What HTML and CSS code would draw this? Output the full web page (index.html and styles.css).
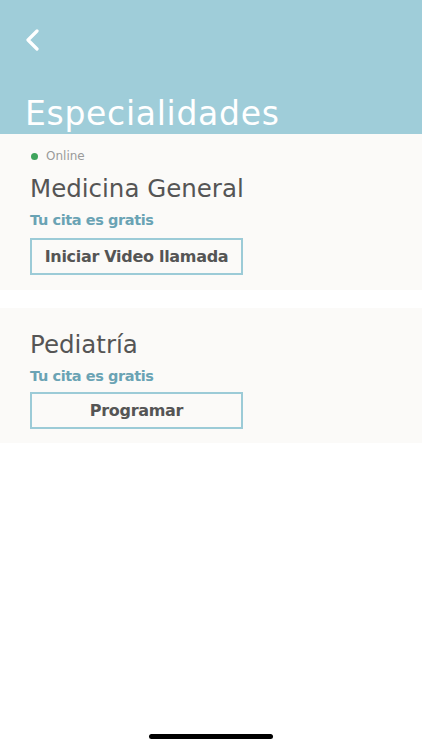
FILE: index.html
```html
<!DOCTYPE html>
<html lang="es">
<head>
<meta charset="utf-8">
<link rel="stylesheet" href="styles.css">
</head>
<body>
<div class="screen">
  <header class="header">
    <div class="back">
      <svg width="16" height="22" viewBox="0 0 16 22"><path d="M12 2 L3 11 L12 20" fill="none" stroke="#fff" stroke-width="3.2" stroke-linecap="round" stroke-linejoin="round"/></svg>
    </div>
    <h1 class="title">Especialidades</h1>
  </header>
  <section class="card card-first">
    <div class="status"><span class="dot"></span><span class="status-text">Online</span></div>
    <h2 class="name">Medicina General</h2>
    <p class="free">Tu cita es gratis</p>
    <button class="btn">Iniciar Video llamada</button>
  </section>
  <section class="card card-second">
    <h2 class="name">Pediatría</h2>
    <p class="free">Tu cita es gratis</p>
    <button class="btn">Programar</button>
  </section>
  <div class="spacer"></div>
  <div class="home-bar"></div>
</div>
</body>
</html>
```
FILE: styles.css
```css
* { box-sizing: border-box; }
html, body { margin: 0; padding: 0; background: #fff; }
body { font-family: "DejaVu Sans", "Open Sans", sans-serif; }
.screen { width: 422px; height: 750px; display: flex; flex-direction: column; overflow: hidden; }
.header { background: #9fcdd9; height: 134px; flex: none; overflow: hidden; padding: 29px 0 0 25px; }
.back { width: 16px; height: 22px; }
.back svg { display: block; }
.title { margin: 43px 0 0 0; color: #fff; font-weight: 400; font-size: 33px; line-height: 40px; letter-spacing: 0.7px; }
.card { background: #fbfaf8; padding: 0 30px; display: flex; flex-direction: column; align-items: flex-start; }
.card-first { height: 156px; padding-top: 14px; }
.card-second { height: 135px; margin-top: 18px; padding-top: 22px; }
.status { display: flex; align-items: center; height: 16px; }
.dot { width: 7px; height: 7px; border-radius: 50%; background: #3fa45c; margin: 0 8px 0 1px; }
.status-text { color: #9a9a9a; font-size: 12px; }
.name { margin: 10px 0 0 0; color: #555; font-weight: 400; font-size: 24.5px; line-height: 30px; }
.card-second .name { margin-top: 0; }
.free { margin: 6px 0 0 0; color: #6aa3b4; font-weight: 700; font-size: 14.5px; line-height: 20px; letter-spacing: -0.4px; }
.btn { margin-top: 8px; width: 213px; height: 37px; border: 2px solid #9ccbd7; background: transparent; color: #555; font-family: inherit; font-weight: 700; font-size: 16px; padding: 0; letter-spacing: -0.3px; }
.card-second .btn { margin-top: 6px; }
.spacer { flex: 1; }
.home-bar { width: 124px; height: 5px; border-radius: 3px; background: #000; margin: 0 auto 11px auto; flex: none; }
```
